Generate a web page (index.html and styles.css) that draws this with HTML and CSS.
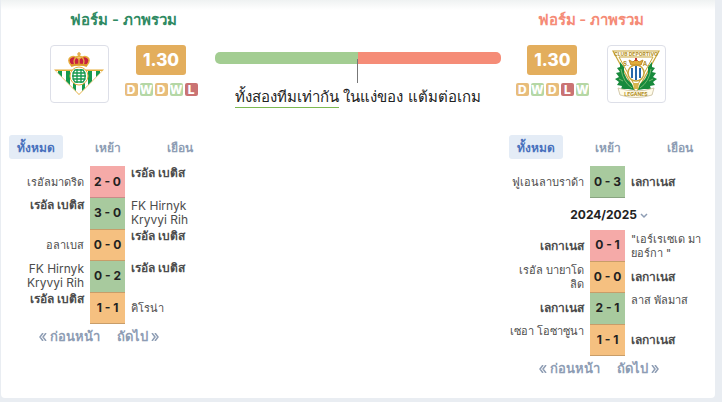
FILE: index.html
```
<!DOCTYPE html>
<html lang="th">
<head>
    <meta charset="UTF-8">
    <meta name="viewport" content="width=device-width, initial-scale=1.0">
    <title>ฟอร์ม - ภาพรวม</title>
    <link rel="stylesheet" href="styles.css">
</head>
<body>
    <main class="card">
        <section class="summary">
            <div class="team home">
                <h2>ฟอร์ม - ภาพรวม</h2>
                <div class="team-info">
                    <div class="crest">
                        <svg viewBox="0 0 52 46" width="52" height="46" role="img" aria-label="เรอัล เบติส">
                            <defs>
                                <clipPath id="betis"><path d="M3 20H49L26 43Z"/></clipPath>
                            </defs>
                            <path d="M1 18.500H51L26 44Z" fill="#e6ae3c"/>
                            <g clip-path="url(#betis)">
                                <path d="M0 18H52V46H0Z" fill="#fff"/>
                                <path d="M5 18h4v28H5zM13 18h4v28h-4zM20 18h3v28h-3zM29 18h3v28h-3zM35 18h4v28h-4zM43 18h4v28h-4z" fill="#15994d"/>
                            </g>
                            <circle cx="26" cy="25" r="9" fill="#fff" stroke="#e6ae3c"/>
                            <path d="M22 19h8l2 3v6l-2 3h-8l-2-3v-6zM20 22h12M19 25h14M20 28h12M24 18v14M28 18v14" fill="none" stroke="#15994d" stroke-width="1.3"/>
                            <path d="M18 14C12 7 20 3 26 8C32 3 40 7 34 14Z" fill="#c8203f" stroke="#e6ae3c" stroke-width="1.5"/>
                            <path d="M22 14C19 8 24 5 26 5S33 8 30 14M26 5V14" fill="none" stroke="#e6ae3c" stroke-width="1.3"/>
                            <path d="M18 15Q26 12 34 15" fill="none" stroke="#dc9c2a" stroke-width="2.2"/>
                            <path d="M26 1v4M24 3h4" stroke="#dc9c2a" stroke-width="1.2"/>
                        </svg>
                    </div>
                    <div class="rating">
                        <strong>1.30</strong>
                        <div class="form"><span class="d">D</span><span class="w">W</span><span class="d">D</span><span class="w">W</span><span class="l">L</span></div>
                    </div>
                </div>
            </div>

            <div class="compare">
                <div class="bar"></div>
                <div class="marker"></div>
                <p><span>ทั้งสองทีมเท่ากัน</span> ในแง่ของ แต้มต่อเกม</p>
            </div>

            <div class="team away">
                <h2>ฟอร์ม - ภาพรวม</h2>
                <div class="team-info">
                    <div class="rating">
                        <strong>1.30</strong>
                        <div class="form"><span class="d">D</span><span class="w">W</span><span class="d">D</span><span class="l">L</span><span class="w">W</span></div>
                    </div>
                    <div class="crest">
                        <svg viewBox="0 0 50 50" width="50" height="50" role="img" aria-label="เลกาเนส">
                            <path d="M2 2H48L25 44Z" fill="#fffdf2" stroke="#c9a63c" stroke-width="1.2"/>
                            <path d="M8 8H42L25 39Z" fill="#fff" stroke="#c9a63c"/>
                            <text x="25" y="7" class="crest-text">CLUB DEPORTIVO</text>
                            <text x="15" y="17" class="crest-text big">S.</text>
                            <text x="35" y="17" class="crest-text big">A.</text>
                            <path d="M9 13L13 18L13 24L16 30L21 35L23 41L17 40L10 40L11 37L6 36L8 33L4 30L8 28L5 24L9 23L6 19L9 18Z" fill="#188a3c"/>
                            <path d="M41 13L37 18L37 24L34 30L29 35L27 41L33 40L40 40L39 37L44 36L42 33L46 30L42 28L45 24L41 23L44 19L41 18Z" fill="#188a3c"/>
                            <path d="M10 20Q12 33 21 39M40 20Q38 33 29 39M8 30l4 2M42 30l-4 2" fill="none" stroke="#75ba72"/>
                            <circle cx="25" cy="24" r="8" fill="#fff" stroke="#c9a63c" stroke-width="1.5"/>
                            <path d="M20 19h2v10h-2zM24 17h2v14h-2zM28 19h2v10h-2z" fill="#2867a9"/>
                            <path d="M20 16L18 11L22 13L25 10L28 13L32 11L30 16Z" fill="#e2ad3b" stroke="#c18a28"/>
                            <path d="M25 9v3" stroke="#c43c32" stroke-width="2"/>
                            <path d="M22 34h6l-1 6h-4z" fill="#d8b64d"/>
                            <path d="M7 39Q25 45 43 39L41 46Q25 51 9 46Z" fill="#fffbea" stroke="#c8bd9b" stroke-width=".8"/>
                            <text x="25" y="47" class="crest-text">LEGANES</text>
                        </svg>
                    </div>
                </div>
            </div>
        </section>

        <section class="results">
            <div class="matches">
                <div class="tabs">
                    <button type="button" class="active">ทั้งหมด</button>
                    <button type="button">เหย้า</button>
                    <button type="button">เยือน</button>
                </div>
                <table class="five">
                    <tr><td>เรอัลมาดริด</td><td class="score lost">2 - 0</td><td class="own top">เรอัล เบติส</td></tr>
                    <tr><td class="own top">เรอัล เบติส</td><td class="score won">3 - 0</td><td class="latin">FK Hirnyk<br>Kryvyi Rih</td></tr>
                    <tr><td>อลาเบส</td><td class="score draw">0 - 0</td><td class="own top">เรอัล เบติส</td></tr>
                    <tr><td class="latin">FK Hirnyk<br>Kryvyi Rih</td><td class="score won">0 - 2</td><td class="own top">เรอัล เบติส</td></tr>
                    <tr><td class="own top">เรอัล เบติส</td><td class="score draw">1 - 1</td><td>คิโรน่า</td></tr>
                </table>
                <nav class="pager">
                    <a href="#"><svg viewBox="0 0 8 8" width="8" height="8"><path d="M4 0L1 4L4 8M7 0L4 4L7 8"/></svg> ก่อนหน้า</a>
                    <a href="#">ถัดไป <svg viewBox="0 0 8 8" width="8" height="8"><path d="M1 0L4 4L1 8M4 0L7 4L4 8"/></svg></a>
                </nav>
            </div>

            <div class="matches">
                <div class="tabs">
                    <button type="button" class="active">ทั้งหมด</button>
                    <button type="button">เหย้า</button>
                    <button type="button">เยือน</button>
                </div>
                <table>
                    <tr><td>ฟูเอนลาบราด้า</td><td class="score won">0 - 3</td><td class="own">เลกาเนส</td></tr>
                </table>
                <button type="button" class="season">2024/2025 <svg viewBox="0 0 8 6" width="8" height="6"><path d="M1 1L4 4L7 1"/></svg></button>
                <table class="four">
                    <tr><td class="own">เลกาเนส</td><td class="score lost">0 - 1</td><td>"เอร์เรเซเด มา<br>ยอร์กา "</td></tr>
                    <tr><td>เรอัล บายาโด<br>ลิด</td><td class="score draw">0 - 0</td><td class="own">เลกาเนส</td></tr>
                    <tr><td class="own">เลกาเนส</td><td class="score won">2 - 1</td><td class="top">ลาส พัลมาส</td></tr>
                    <tr><td class="top">เซอา โอซาซูนา</td><td class="score draw">1 - 1</td><td class="own">เลกาเนส</td></tr>
                </table>
                <nav class="pager">
                    <a href="#"><svg viewBox="0 0 8 8" width="8" height="8"><path d="M4 0L1 4L4 8M7 0L4 4L7 8"/></svg> ก่อนหน้า</a>
                    <a href="#">ถัดไป <svg viewBox="0 0 8 8" width="8" height="8"><path d="M1 0L4 4L1 8M4 0L7 4L4 8"/></svg></a>
                </nav>
            </div>
        </section>
    </main>
</body>
</html>
```
FILE: styles.css
```
*{
    box-sizing: border-box;
}
body{
    margin: 0;
    padding: 0 7px 4px 1px;
    background-color: #e9edf2;
    font-family: Inter, "Liberation Sans", sans-serif;
    font-size: 12px;
    color: #222222;
}
button{
    border: 0;
    padding: 0;
    background: none;
    font-family: inherit;
    cursor: pointer;
}
a{
    text-decoration: none;
}

.card{
    padding-bottom: 20px;
    border-radius: 0 0 4px 4px;
    background: linear-gradient(#eff2f2, #ffffff 10px);
}

.summary{
    display: grid;
    grid-template-columns: 30% 40% 30%;
    padding-top: 10px;
}
.team h2{
    margin: 0 0 15px;
    font-size: 15px;
    line-height: 20px;
    font-weight: 600;
    text-align: center;
}
.home{
    padding-left: 31px;
}
.away{
    padding-right: 34px;
}
.home h2{
    color: #2f8a62;
}
.away h2{
    color: #f58b76;
}
.team-info{
    display: flex;
    justify-content: center;
    gap: 16px;
}
.away .team-info{
    gap: 18px;
}
.crest{
    display: flex;
    align-items: center;
    justify-content: center;
    width: 59px;
    height: 58px;
    border: 1px solid #dddfe8;
    border-radius: 4px;
}
.crest-text{
    font-size: 5px;
    font-weight: 700;
    fill: #b28d25;
    text-anchor: middle;
}
.big{
    font-size: 6px;
}
.rating{
    display: flex;
    flex-direction: column;
    align-items: center;
    gap: 8px;
}
.rating strong{
    width: 50px;
    border-radius: 3px;
    background-color: #e3ae5d;
    color: #ffffff;
    font-size: 17px;
    font-weight: 800;
    line-height: 30px;
    text-align: center;
}
.form{
    display: flex;
    gap: 2px;
}
.form span{
    width: 13px;
    border-radius: 2px;
    color: #ffffff;
    font-size: 12px;
    font-weight: 800;
    line-height: 13px;
    text-align: center;
}
.form .d{
    background-color: #e8bd7b;
}
.form .w{
    background-color: #b5d7a5;
}
.form .l{
    background-color: #ca7373;
}

.compare{
    padding-top: 42px;
    text-align: center;
}
.bar{
    height: 12px;
    border-radius: 5px;
    background: linear-gradient(90deg, #a3cd92 50%, #f58c77 50%);
}
.marker{
    position: relative;
    width: 1px;
    height: 24px;
    margin: -5px auto 0;
    background-color: #777777;
}
.compare p{
    margin: 4px 0 0;
    font-size: 15px;
    line-height: 20px;
}
.compare p span{
    display: inline-block;
    border-bottom: 1px solid #7cb850;
}

.results{
    display: flex;
    justify-content: space-between;
    padding: 27px 0 0 8px;
}
.matches{
    width: 206px;
}
.tabs{
    display: flex;
    gap: 18px;
    margin-bottom: 7px;
}
.tabs button{
    width: 54px;
    height: 24px;
    border-radius: 3px;
    color: #8e9db4;
    font-size: 12px;
    font-weight: 600;
}
.tabs .active{
    background-color: #e4ecf6;
    color: #4971bd;
}

table{
    width: 197px;
    height: 32px;
    table-layout: fixed;
    border-collapse: collapse;
}
.five{
    height: 158px;
}
.four{
    height: 126px;
}
td{
    width: 81px;
    height: 31px;
    padding: 0 0 0 6px;
    color: #4c4c4c;
    font-size: 11px;
    line-height: 14px;
    white-space: nowrap;
}
td:first-child{
    padding: 0 6px 0 0;
    text-align: right;
}
td.score{
    width: 35px;
    padding: 0;
    border-bottom: 1px solid rgba(0, 0, 0, .18);
    color: #222222;
    font-size: 12px;
    font-weight: 700;
    text-align: center;
}
.latin{
    font-size: 12px;
}
.own{
    font-size: 12px;
    font-weight: 700;
}
.top{
    vertical-align: top;
}
.lost{
    background-color: #f5aaa8;
}
.won{
    background-color: #a8ca9e;
}
.draw{
    background-color: #f5c080;
}

.season{
    display: block;
    width: 200px;
    height: 32px;
    color: #222222;
    font-size: 12px;
    font-weight: 700;
}
.pager{
    display: flex;
    justify-content: center;
    gap: 16px;
    width: 180px;
    margin-top: 2px;
}
.pager a{
    color: #8e9db4;
    font-size: 13px;
    font-weight: 600;
    line-height: 20px;
}
.pager svg path, .season path{
    fill: none;
    stroke: #8e9db4;
    stroke-width: 1.5;
}
```
